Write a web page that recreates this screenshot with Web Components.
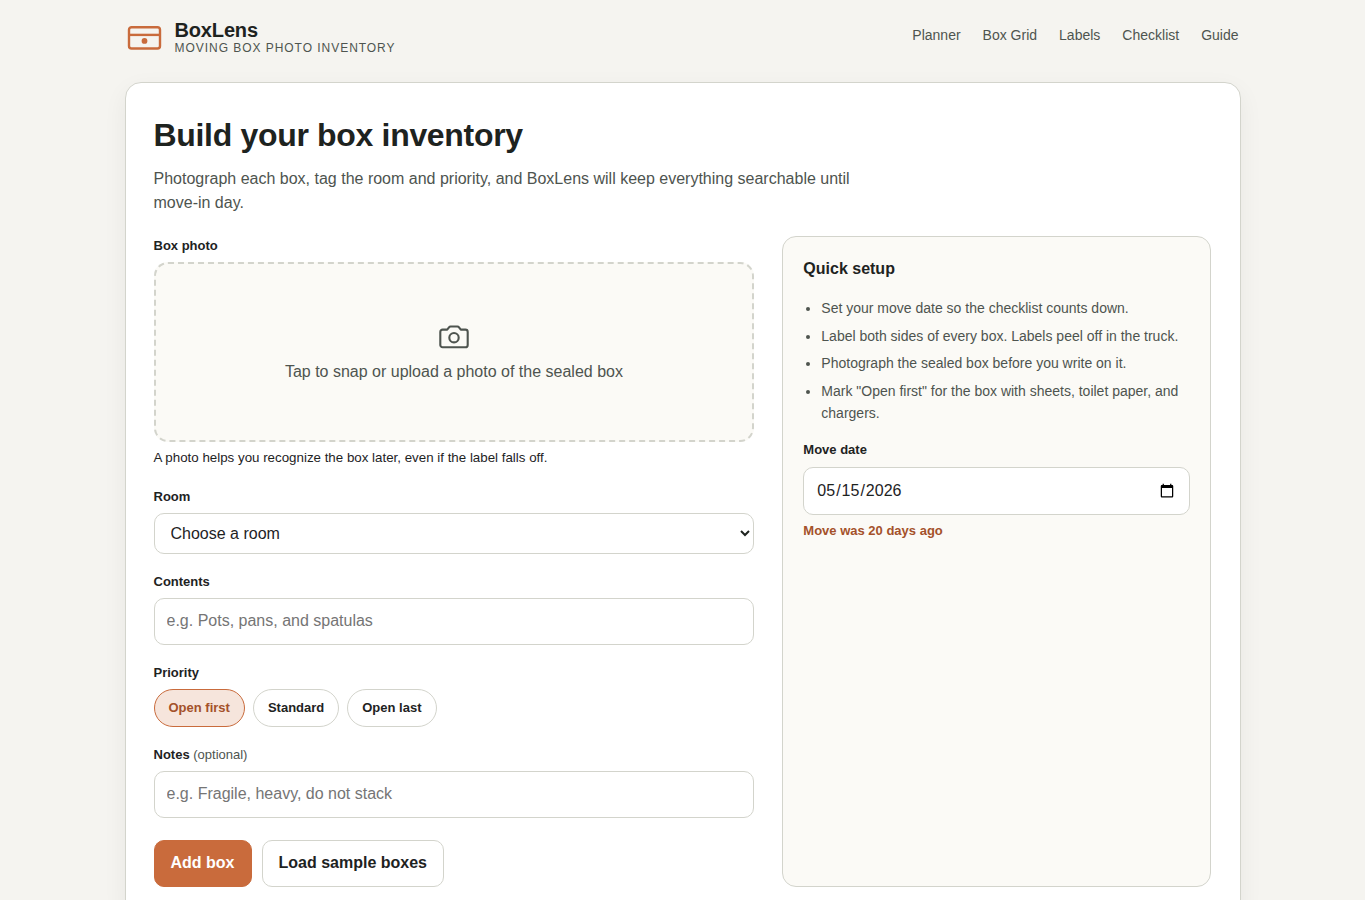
<!DOCTYPE html>
<html lang="en">
<head>
<meta charset="UTF-8">
<meta name="viewport" content="width=device-width, initial-scale=1.0">
<title>BoxLens</title>
<style>
    :root {
        --bg: #f5f4f0;
        --surface: #ffffff;
        --soft: #fbfaf6;
        --ink: #1e231f;
        --muted: #4e544f;
        --line: #d3d4cc;
        --accent: #c96b3c;
        --accent-dark: #a4512a;
        --accent-soft: #f6e5dc;
    }
    body {
        margin: 0;
        background: var(--bg);
        color: var(--ink);
        font-family: "Liberation Sans", Arial, sans-serif;
        font-size: 16px;
        line-height: 1.5;
    }
</style>
</head>
<body>
<box-app></box-app>

<script>
class BoxHeader extends HTMLElement {
    constructor() {
        super();
        this.attachShadow({ mode: 'open' });
    }

    connectedCallback() {
        const links = ['Planner', 'Box Grid', 'Labels', 'Checklist', 'Guide'];
        this.shadowRoot.innerHTML = `
            <style>
                :host {
                    display: flex;
                    justify-content: space-between;
                    align-items: flex-start;
                    height: 82px;
                    box-sizing: border-box;
                    padding-top: 18px;
                }
                .brand {
                    display: flex;
                    align-items: center;
                    gap: 12px;
                }
                svg { display: block; }
                .text { padding-bottom: 2px; }
                .name {
                    font-size: 20px;
                    font-weight: 700;
                    line-height: 24px;
                    letter-spacing: -0.15px;
                }
                .tagline {
                    font-size: 12px;
                    line-height: 12px;
                    letter-spacing: 0.96px;
                    text-transform: uppercase;
                    color: var(--muted);
                }
                nav {
                    display: flex;
                    gap: 22px;
                    padding: 7px 2px 0 0;
                }
                a {
                    color: var(--muted);
                    font-size: 14px;
                    line-height: 21px;
                    text-decoration: none;
                }
            </style>
            <div class="brand">
                <svg width="38" height="38" viewBox="0 0 38 38" fill="none" stroke="#c96b3c" stroke-width="2.4">
                    <rect x="4" y="9.2" width="31" height="21.3" rx="2.6"/>
                    <path d="M4 16.9h31"/>
                    <circle cx="19.5" cy="22.9" r="2.9" fill="#c96b3c" stroke="none"/>
                </svg>
                <div class="text">
                    <div class="name">BoxLens</div>
                    <div class="tagline">Moving box photo inventory</div>
                </div>
            </div>
            <nav>${links.map(text => `<a href="#">${text}</a>`).join('')}</nav>
        `;
    }
}

class FormField extends HTMLElement {
    constructor() {
        super();
        this.attachShadow({ mode: 'open' });
    }

    connectedCallback() {
        const note = this.getAttribute('note');
        this.shadowRoot.innerHTML = `
            <style>
                :host { display: block; }
                .label {
                    display: block;
                    margin-bottom: var(--label-gap, 6.5px);
                    font-size: 13px;
                    font-weight: 700;
                    line-height: 19.5px;
                }
                .note { font-weight: 400; color: var(--muted); }
                ::slotted(input), ::slotted(select) {
                    display: block;
                    width: 100%;
                    height: 47px;
                    box-sizing: border-box;
                    margin: 0;
                    padding: 10px 12px;
                    border: 1px solid var(--line);
                    border-radius: 10px;
                    background: var(--surface);
                    color: var(--ink);
                    font: inherit;
                }
                ::slotted(select) { height: 41px; }
                ::slotted(input[type="date"]) { height: 48px; }
            </style>
            <label class="label">${this.getAttribute('label')}${note ? ` <span class="note">${note}</span>` : ''}</label>
            <slot></slot>
        `;
    }
}

class PhotoDrop extends HTMLElement {
    constructor() {
        super();
        this.attachShadow({ mode: 'open' });
    }

    connectedCallback() {
        this.shadowRoot.innerHTML = `
            <style>
                :host { display: block; }
                .drop {
                    display: flex;
                    flex-direction: column;
                    align-items: center;
                    justify-content: center;
                    gap: 7px;
                    height: 180px;
                    box-sizing: border-box;
                    border: 2px dashed var(--line);
                    border-radius: 14px;
                    background: var(--soft);
                    color: var(--muted);
                    cursor: pointer;
                }
                .hint {
                    margin-top: 6px;
                    font-size: 13.33px;
                    line-height: 19.5px;
                }
            </style>
            <div class="drop">
                <svg width="32" height="32" viewBox="0 0 32 32" fill="none" stroke="currentColor" stroke-width="2.1" stroke-linejoin="round">
                    <path d="M4.6 8.6H9.2L11 6.3Q11.6 5.5 12.6 5.5H19.4Q20.4 5.5 21 6.3L22.8 8.6H27.4A2.3 2.3 0 0 1 29.7 10.9V23.9A2.3 2.3 0 0 1 27.4 26.2H4.6A2.3 2.3 0 0 1 2.3 23.9V10.9A2.3 2.3 0 0 1 4.6 8.6Z"/>
                    <circle cx="16" cy="16.7" r="4.7"/>
                </svg>
                <span>Tap to snap or upload a photo of the sealed box</span>
            </div>
            <div class="hint">A photo helps you recognize the box later, even if the label falls off.</div>
        `;
    }
}

class PriorityChips extends HTMLElement {
    constructor() {
        super();
        this.attachShadow({ mode: 'open' });
        this.selected = 'Open first';
    }

    connectedCallback() {
        this.render();
        this.shadowRoot.addEventListener('click', (e) => {
            const chip = e.target.closest('button');
            if (!chip) return;
            this.selected = chip.textContent;
            this.render();
        });
    }

    render() {
        const options = ['Open first', 'Standard', 'Open last'];
        this.shadowRoot.innerHTML = `
            <style>
                :host {
                    display: flex;
                    gap: 8px;
                }
                button {
                    height: 38px;
                    padding: 0 14px;
                    border: 1px solid var(--line);
                    border-radius: 999px;
                    background: var(--surface);
                    color: var(--ink);
                    font: 700 13px/19.5px "Liberation Sans", Arial, sans-serif;
                    cursor: pointer;
                }
                .active {
                    border-color: var(--accent);
                    background: var(--accent-soft);
                    color: var(--accent-dark);
                }
            </style>
            ${options.map(name => `<button type="button" class="${name === this.selected ? 'active' : ''}">${name}</button>`).join('')}
        `;
    }
}

class AppButton extends HTMLElement {
    constructor() {
        super();
        this.attachShadow({ mode: 'open' });
    }

    connectedCallback() {
        this.shadowRoot.innerHTML = `
            <style>
                :host { display: block; }
                button {
                    display: block;
                    height: 47px;
                    padding: 0 16px 1px;
                    border: 1px solid var(--line);
                    border-radius: 10px;
                    background: var(--surface);
                    color: var(--ink);
                    font: 700 16px/24px "Liberation Sans", Arial, sans-serif;
                    cursor: pointer;
                }
                :host([primary]) button {
                    border-color: var(--accent);
                    background: var(--accent);
                    color: #fff;
                }
            </style>
            <button type="button"><slot></slot></button>
        `;
    }
}

class QuickSetup extends HTMLElement {
    constructor() {
        super();
        this.attachShadow({ mode: 'open' });
    }

    connectedCallback() {
        this.shadowRoot.innerHTML = `
            <style>
                :host {
                    display: block;
                    box-sizing: border-box;
                    padding: 20px;
                    border: 1px solid var(--line);
                    border-radius: 14px;
                    background: var(--soft);
                }
                h2 {
                    margin: 0 0 17px;
                    font-size: 16px;
                    line-height: 24px;
                }
                ul {
                    margin: 0 0 15px;
                    padding-left: 18px;
                    color: var(--muted);
                    font-size: 14px;
                    line-height: 21.7px;
                }
                li { margin-bottom: 6px; }
                li:last-child { margin-bottom: 0; }
                form-field { --label-gap: 8px; }
                .status {
                    margin-top: 6px;
                    font-size: 13px;
                    font-weight: 700;
                    line-height: 19.5px;
                    color: var(--accent-dark);
                }
            </style>
            <h2>Quick setup</h2>
            <ul>
                <li>Set your move date so the checklist counts down.</li>
                <li>Label both sides of every box. Labels peel off in the truck.</li>
                <li>Photograph the sealed box before you write on it.</li>
                <li>Mark "Open first" for the box with sheets, toilet paper, and chargers.</li>
            </ul>
            <form-field label="Move date"><input type="date" value="2026-05-15"></form-field>
            <div class="status">Move was 20 days ago</div>
        `;
    }
}

class BoxPlanner extends HTMLElement {
    constructor() {
        super();
        this.attachShadow({ mode: 'open' });
    }

    connectedCallback() {
        this.shadowRoot.innerHTML = `
            <style>
                :host {
                    display: block;
                    padding: 28px;
                    border: 1px solid var(--line);
                    border-radius: 16px;
                    background: var(--surface);
                    box-shadow: 0 8px 24px rgba(30, 33, 31, 0.06);
                }
                h1 {
                    margin: 0 0 8px;
                    font-size: 32px;
                    line-height: 48px;
                    letter-spacing: -0.32px;
                }
                .lead {
                    max-width: 720px;
                    margin: 0 0 21px;
                    color: var(--muted);
                }
                .columns {
                    display: grid;
                    grid-template-columns: 1.4fr 1fr;
                    gap: 28px;
                }
                .form {
                    display: flex;
                    flex-direction: column;
                    gap: 18px;
                }
                .photo { margin-bottom: 1px; }
                .actions {
                    display: flex;
                    gap: 10px;
                    margin-top: 4px;
                }
            </style>
            <h1>Build your box inventory</h1>
            <p class="lead">Photograph each box, tag the room and priority, and BoxLens will keep everything searchable until move-in day.</p>
            <div class="columns">
                <div class="form">
                    <form-field class="photo" label="Box photo"><photo-drop></photo-drop></form-field>
                    <form-field label="Room">
                        <select>
                            <option>Choose a room</option>
                        </select>
                    </form-field>
                    <form-field label="Contents"><input type="text" placeholder="e.g. Pots, pans, and spatulas"></form-field>
                    <form-field label="Priority"><priority-chips></priority-chips></form-field>
                    <form-field label="Notes" note="(optional)"><input type="text" placeholder="e.g. Fragile, heavy, do not stack"></form-field>
                    <div class="actions">
                        <app-button primary>Add box</app-button>
                        <app-button>Load sample boxes</app-button>
                    </div>
                </div>
                <quick-setup></quick-setup>
            </div>
        `;
    }
}

class BoxApp extends HTMLElement {
    constructor() {
        super();
        this.attachShadow({ mode: 'open' });
    }

    connectedCallback() {
        this.shadowRoot.innerHTML = `
            <style>
                :host {
                    display: block;
                    max-width: 1116px;
                    margin: 0 auto;
                    padding-bottom: 40px;
                }
            </style>
            <box-header></box-header>
            <box-planner></box-planner>
        `;
    }
}

customElements.define('box-header', BoxHeader);
customElements.define('form-field', FormField);
customElements.define('photo-drop', PhotoDrop);
customElements.define('priority-chips', PriorityChips);
customElements.define('app-button', AppButton);
customElements.define('quick-setup', QuickSetup);
customElements.define('box-planner', BoxPlanner);
customElements.define('box-app', BoxApp);
</script>
</body>
</html>
